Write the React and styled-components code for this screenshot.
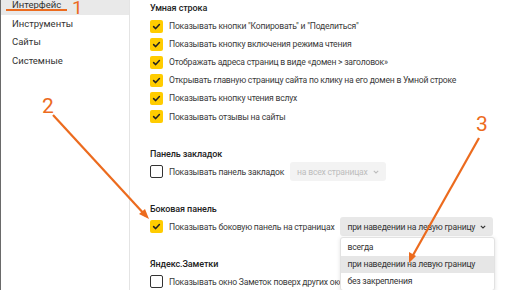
import React from "react";
import styled, { createGlobalStyle } from "styled-components";

const GlobalStyle = createGlobalStyle`
  html, body { margin: 0; padding: 0; background: #fff; }
  body { font-family: Roboto, "Noto Sans", sans-serif; overflow: hidden; }
`;

const Page = styled.div`
  position: relative;
  width: 516px;
  height: 290px;
  overflow: hidden;
  display: flex;
  box-sizing: border-box;
  border-left: 1px solid #6a6a6a;
`;

const Sidebar = styled.nav`
  width: 128px;
  flex: none;
  border-right: 1px solid #e4e4e4;
  margin-top: -4px;
`;

const NavItem = styled.div`
  height: 18.5px;
  line-height: 18.5px;
  padding-left: 11px;
  font-size: 9.5px;
  color: #333;
  background: ${(p) => (p.$active ? "#e9e9e9" : "transparent")};
`;

const Content = styled.main`
  flex: 1;
  padding-left: 20px;
  margin-top: -1px;
`;

const Section = styled.section`
  margin-bottom: 19px;
`;

const Heading = styled.div`
  height: 18px;
  line-height: 18px;
  font-size: 9px;
  font-weight: 500;
  letter-spacing: -0.1px;
  color: #222;
`;

const Row = styled.div`
  display: flex;
  align-items: center;
  height: 18.1px;
  font-size: 8.6px;
  letter-spacing: -0.22px;
  color: #3a3a3a;
  white-space: nowrap;
`;

const Box = styled.span`
  width: 13px;
  height: 13px;
  box-sizing: border-box;
  border-radius: 2px;
  margin-right: 6px;
  flex: none;
  display: flex;
  align-items: center;
  justify-content: center;
  background: ${(p) => (p.$checked ? "#ffcc00" : "#fff")};
  border: ${(p) => (p.$checked ? "none" : "1.5px solid #333")};
`;

const SelectWrap = styled.div`
  position: relative;
  margin-left: 6px;
`;

const Select = styled.div`
  height: 19px;
  display: flex;
  align-items: center;
  gap: 5px;
  padding: 0 7px;
  border-radius: 3px;
  font-size: 8.6px;
  background: ${(p) => (p.$disabled ? "#f3f3f3" : "#e8e8e8")};
  color: ${(p) => (p.$disabled ? "#bdbdbd" : "#333")};
`;

const Menu = styled.div`
  position: absolute;
  left: 0;
  top: 20px;
  width: 153px;
  padding-top: 1px;
  background: #fff;
  border: 1px solid #e2e2e2;
  border-radius: 3px;
  box-shadow: 0 1px 4px rgba(0, 0, 0, 0.12);
  z-index: 2;
`;

const MenuItem = styled.div`
  height: 17px;
  line-height: 17px;
  padding-left: 6px;
  font-size: 8.6px;
  letter-spacing: -0.22px;
  color: #333;
  background: ${(p) => (p.$hover ? "#e6e6e6" : "transparent")};
`;

const Overlay = styled.svg`
  position: absolute;
  left: 0;
  top: 0;
  pointer-events: none;
  z-index: 5;
`;

const Check = () => (
  <svg width="9" height="9" viewBox="0 0 9 9">
    <path d="M1.6 4.6 L3.7 6.6 L7.4 2.6" fill="none" stroke="#222" strokeWidth="1.5" strokeLinecap="round" strokeLinejoin="round" />
  </svg>
);

const Chevron = () => (
  <svg width="6" height="4" viewBox="0 0 6 4">
    <path d="M0.8 0.8 L3 3 L5.2 0.8" fill="none" stroke="currentColor" strokeWidth="1.1" />
  </svg>
);

function Option({ checked, children }) {
  return (
    <Row>
      <Box $checked={checked}>{checked && <Check />}</Box>
      {children}
    </Row>
  );
}

const nav = ["Интерфейс", "Инструменты", "Сайты", "Системные"];

const smart = [
  "Показывать кнопки \"Копировать\" и \"Поделиться\"",
  "Показывать кнопку включения режима чтения",
  "Отображать адреса страниц в виде «домен > заголовок»",
  "Открывать главную страницу сайта по клику на его домен в Умной строке",
  "Показывать кнопку чтения вслух",
  "Показывать отзывы на сайты",
];

const orange = "#ec6b1e";

export default function App() {
  return (
    <Page>
      <GlobalStyle />
      <Sidebar>
        {nav.map((n, i) => (
          <NavItem key={n} $active={i === 0}>{n}</NavItem>
        ))}
      </Sidebar>
      <Content>
        <Section>
          <Heading>Умная строка</Heading>
          {smart.map((t) => (
            <Option key={t} checked>{t}</Option>
          ))}
        </Section>
        <Section>
          <Heading>Панель закладок</Heading>
          <Row>
            <Box />
            Показывать панель закладок
            <SelectWrap>
              <Select $disabled>на всех страницах <Chevron /></Select>
            </SelectWrap>
          </Row>
        </Section>
        <Section>
          <Heading>Боковая панель</Heading>
          <Row>
            <Box $checked><Check /></Box>
            Показывать боковую панель на страницах
            <SelectWrap>
              <Select>при наведении на левую границу <Chevron /></Select>
              <Menu>
                <MenuItem>всегда</MenuItem>
                <MenuItem $hover>при наведении на левую границу</MenuItem>
                <MenuItem>без закрепления</MenuItem>
              </Menu>
            </SelectWrap>
          </Row>
        </Section>
        <Section>
          <Heading>Яндекс.Заметки</Heading>
          <Option>Показывать окно Заметок поверх других окон</Option>
        </Section>
      </Content>
      <Overlay width="516" height="290" viewBox="0 0 516 290">
        <line x1="5" y1="10" x2="66" y2="10" stroke={orange} strokeWidth="2" />
        <text x="71" y="14" fill={orange} fontSize="19" fontFamily="Roboto, sans-serif">1</text>
        <text x="41" y="113" fill={orange} fontSize="21" fontFamily="Roboto, sans-serif">2</text>
        <line x1="52" y1="115" x2="145" y2="216" stroke={orange} strokeWidth="2.2" />
        <path d="M148 219 L138 214 L144 209 Z" fill={orange} />
        <text x="475" y="131" fill={orange} fontSize="21" fontFamily="Roboto, sans-serif">3</text>
        <line x1="478" y1="138" x2="411" y2="257" stroke={orange} strokeWidth="2.2" />
        <path d="M408 263 L408 252 L415 256 Z" fill={orange} />
      </Overlay>
    </Page>
  );
}
